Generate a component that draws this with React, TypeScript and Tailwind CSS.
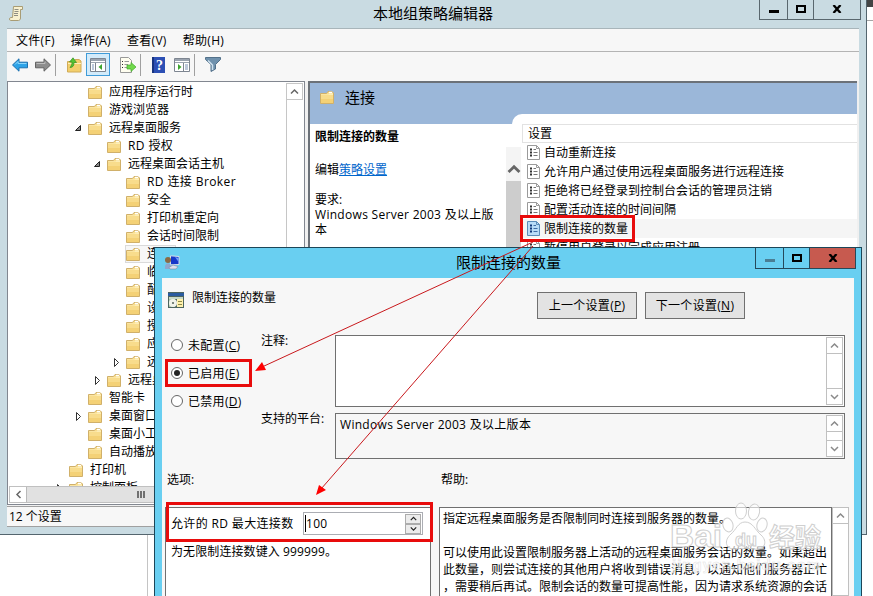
import type { ReactNode } from 'react'
import clsx from 'clsx'

type TreeItem = {
  label: string
  depth: number
  state?: 'open' | 'closed'
  selected?: boolean
}

const TREE: TreeItem[] = [
  { label: '应用程序运行时', depth: 1 },
  { label: '游戏浏览器', depth: 1 },
  { label: '远程桌面服务', depth: 1, state: 'open' },
  { label: 'RD 授权', depth: 2 },
  { label: '远程桌面会话主机', depth: 2, state: 'open' },
  { label: 'RD 连接 Broker', depth: 3 },
  { label: '安全', depth: 3 },
  { label: '打印机重定向', depth: 3 },
  { label: '会话时间限制', depth: 3 },
  { label: '连接', depth: 3, selected: true },
  { label: '临时文件夹', depth: 3 },
  { label: '配置文件', depth: 3 },
  { label: '设备和资源重定向', depth: 3 },
  { label: '授权', depth: 3 },
  { label: '应用程序兼容性', depth: 3 },
  { label: '远程会话环境', depth: 3, state: 'closed' },
  { label: '远程桌面连接客户端', depth: 2, state: 'closed' },
  { label: '智能卡', depth: 1 },
  { label: '桌面窗口管理器', depth: 1, state: 'closed' },
  { label: '桌面小工具', depth: 1 },
  { label: '自动播放策略', depth: 1 },
  { label: '打印机', depth: 0 },
  { label: '控制面板', depth: 0, state: 'closed' },
]

const INDENT = ['pl-[48px]', 'pl-[67px]', 'pl-[86px]', 'pl-[105px]']

const SETTINGS = [
  '自动重新连接',
  '允许用户通过使用远程桌面服务进行远程连接',
  '拒绝将已经登录到控制台会话的管理员注销',
  '配置活动连接的时间间隔',
  '限制连接的数量',
  '暂停用户登录以完成应用注册',
]

function Folder() {
  return (
    <svg width="14" height="14" viewBox="0 0 14 14" className="shrink-0">
      <path d="M.5 3.500h6l1.500-2h4l1.500 1.500v10.500H.5z" fill="#f8dc8c" stroke="#d0b06a" />
      <path d="M9 2.500h3" stroke="#fff" strokeWidth="1.500" />
      <path d="M1 4.500h7.500l1-1H13v1.500H1z" fill="#fdedb5" />
      <path d="M1 9h12v4H1z" fill="#f2ca68" opacity=".6" />
    </svg>
  )
}

function Chevron({ dir, color = '#666', size = 9, weight = 1.5 }: { dir: 'up' | 'down' | 'left'; color?: string; size?: number; weight?: number }) {
  const d = { up: 'M1 6.500 4.500 3 8 6.500', down: 'M1 3 4.500 6.500 8 3', left: 'M6.500 1 3 4.500 6.500 8' }[dir]
  return (
    <svg width={size} height={size} viewBox="0 0 9 9" fill="none" stroke={color} strokeWidth={weight}>
      <path d={d} />
    </svg>
  )
}

function Expander({ state }: { state?: 'open' | 'closed' }) {
  return (
    <svg width="8" height="10" viewBox="0 0 8 10" className="mr-[6px] -ml-px shrink-0">
      {state === 'open' && <path d="M6.500 2.500v5h-5z" fill="#8a8a8a" stroke="#222" />}
      {state === 'closed' && <path d="M2.500 1.500v8l4-4z" fill="#fff" stroke="#333" />}
    </svg>
  )
}

function SettingIcon({ selected }: { selected: boolean }) {
  return (
    <svg width="13" height="15" viewBox="0 0 13 15" className="mr-1 shrink-0">
      <path d="M.5.5h9l3 3v11H.5z" fill={selected ? '#b9dcf7' : '#fff'} stroke={selected ? '#5b8cb8' : '#9a9a9a'} />
      <path d="M9.500.5v3h3" fill="none" stroke={selected ? '#5b8cb8' : '#9a9a9a'} />
      <path d="M3 4.500h2M3 7.500h2M3 10.500h2" stroke={selected ? '#12397a' : '#333'} strokeWidth="2" />
      <path d="M6.500 4.500H9M6.500 7.500h4M6.500 10.500h4" stroke={selected ? '#3f6ca5' : '#777'} />
    </svg>
  )
}

function CaptionButtons({ dialog }: { dialog?: boolean }) {
  return (
    <div className={clsx('flex border border-t-0', dialog ? 'h-[21px] w-[101px] border-[#26495a]' : 'h-5 w-[102px] border-[#59676e]')}>
      <div className={clsx('flex w-7 justify-center border-r', dialog ? 'border-[#26495a] pt-[11px]' : 'border-[#59676e] pt-[10px]')}>
        <span className={clsx('h-[3px] w-[10px]', dialog ? 'bg-[#4a7e94]' : 'bg-black')} />
      </div>
      <div className={clsx('flex w-[26px] justify-center border-r', dialog ? 'border-[#26495a] pt-[6px]' : 'border-[#59676e] pt-[5px]')}>
        <span className="h-2 w-[10px] border-2 border-black" />
      </div>
      <div className={clsx('flex flex-1 justify-center', dialog ? 'bg-[#c75a4f] pt-[6px]' : 'pt-[5px]')}>
        <svg width="10" height="8" viewBox="0 0 10 8" stroke="#000" strokeWidth="2.300">
          <path d="M1.500 0 8.500 8M8.500 0 1.500 8" />
        </svg>
      </div>
    </div>
  )
}

function Sep({ className }: { className?: string }) {
  return <span className={clsx('h-[22px] w-px bg-[#a0a0a0]', className)} />
}

function PaneIcon({ flip }: { flip?: boolean }) {
  return (
    <svg width="16" height="14" viewBox="0 0 16 14">
      <path d="M.5.5h15v13H.5z" fill="#fff" stroke="#7d8590" />
      <path d="M1 1h14v2H1z" fill="#9aa3af" />
      <path d="M1 4.500h14" stroke="#9aa3af" />
      {flip ? (
        <>
          <path d="M9.500 5v8" stroke="#7d8590" />
          <path d="M4 6v6l3.500-3z" fill="#3ea52f" />
          <path d="M11 7h3M11 9h3M11 11h3" stroke="#7890b5" />
        </>
      ) : (
        <>
          <path d="M5.500 5v8" stroke="#7d8590" />
          <path d="M12 6v6L8.500 9z" fill="#3ea52f" />
          <path d="M2 7h2M2 9h2M2 11h2" stroke="#7890b5" />
        </>
      )}
    </svg>
  )
}

function Toolbar() {
  return (
    <div className="flex h-[29px] items-center bg-[#f7f7f7] pb-[4px] pl-[5px]">
      <svg width="16" height="14" viewBox="0 0 16 14">
        <path d="M.5 7 7 .8v3.400h8.500v5.600H7v3.400z" fill="#2da3e8" stroke="#1d6fae" />
        <path d="M3 6.500 6 3.500v2h8.500" stroke="#8bd5fa" fill="none" />
      </svg>
      <svg width="16" height="14" viewBox="0 0 16 14" className="ml-[7px]">
        <path d="M15.500 7 9 .8v3.400H.5v5.600H9v3.400z" fill="#8d8d8d" stroke="#626262" />
        <path d="M1.500 5.500H10v-2" stroke="#bcbcbc" fill="none" />
      </svg>
      <Sep className="ml-1" />
      <svg width="15" height="16" viewBox="0 0 15 16" className="ml-[11px]">
        <path d="M.5 4.500h6l1.500-2h4l2 1.500v11H.5z" fill="#f3cf6c" stroke="#d0ab58" />
        <path d="M1 6.500h13" stroke="#fdeeb8" />
        <path d="M3 10.500c3 0 4-2 4-5h2.500L6 .8 2.500 5H5c0 2-.5 3.500-2 5.500z" fill="#55c334" stroke="#369021" strokeWidth=".7" />
      </svg>
      <div className="ml-[4px] flex h-[23px] w-6 items-center justify-center border border-[#3f9bd8] bg-[#d3ebfa]">
        <PaneIcon />
      </div>
      <svg width="17" height="16" viewBox="0 0 17 16" className="ml-[10px]">
        <path d="M.5.5h8l3 3v12H.5z" fill="#fffef0" stroke="#999" />
        <path d="M2 4.500h1M2 7.500h1M2 10.500h1" stroke="#333" />
        <path d="M4.500 4.500H9M4.500 7.500H8M4.500 10.500H8" stroke="#999" />
        <path d="M7 8h4V5.500l5 4.500-5 4.500V12H7z" fill="#71d94c" stroke="#42a92a" strokeWidth=".7" />
      </svg>
      <Sep className="ml-[3px]" />
      <svg width="13" height="16" viewBox="0 0 13 16" className="ml-[11px]">
        <path d="M0 0h13v16H0z" fill="#2c4fb4" />
        <path d="M0 0h2v16H0z" fill="#18347f" />
        <text x="7.500" y="13" fontSize="14" textAnchor="middle" fill="#fff" fontFamily="Liberation Serif, serif" fontWeight="700">
          ?
        </text>
      </svg>
      <span className="ml-[9px]">
        <PaneIcon flip />
      </span>
      <Sep className="ml-[4px]" />
      <svg width="16" height="15" viewBox="0 0 16 15" className="ml-[10px]">
        <path d="M.5.5h15v2l-5 5V12L6 14.500v-7l-5.500-5z" fill="#6f91ad" stroke="#53718a" />
        <path d="M3 3.500 7.500 8v5" stroke="#cfe1ee" strokeWidth="1.500" fill="none" />
      </svg>
    </div>
  )
}

function Tree() {
  return (
    <div className="flex h-[424px] w-[298px] flex-col border border-[#828790] bg-white">
      <div className="flex h-[404px]">
        <div className="flex-1 overflow-hidden pt-px">
          {TREE.map((item) => (
            <div key={item.label + item.depth} className={clsx('flex h-[18px] items-center whitespace-nowrap', INDENT[item.depth])}>
              <Expander state={item.state} />
              <div
                className={clsx(
                  '-ml-px flex h-[18px] items-center border pr-1',
                  item.selected ? 'border-[#dadada] bg-[#f7f7f7]' : 'border-transparent',
                )}
              >
                <Folder />
                <span className={clsx('ml-[7px] leading-4', item.label.startsWith('RD') && 'tracking-[0.4px]')}>{item.label}</span>
              </div>
            </div>
          ))}
        </div>
        <div className="mr-px mt-px w-[17px] border-l border-[#c6c6c6]">
          <div className="flex h-[17px] items-center justify-center border-y border-r border-[#c6c6c6]">
            <Chevron dir="up" />
          </div>
        </div>
      </div>
      <div className="mx-px flex h-[17px] border border-[#c0c0c0] bg-[#e1e1e1]">
        <div className="flex w-[17px] items-center justify-center border-r border-[#bababa] bg-white">
          <Chevron dir="left" />
        </div>
        <div className="ml-[110px] flex items-center gap-px">
          <i className="h-[7px] w-[2px] bg-[#707070]" />
          <i className="h-[7px] w-[2px] bg-[#707070]" />
          <i className="h-[7px] w-[2px] bg-[#707070]" />
        </div>
      </div>
    </div>
  )
}

function DetailsPane() {
  return (
    <div className="ml-[3px] flex h-[424px] w-[549px] flex-col border-l-2 border-t-2 border-[#6b7178] bg-[#9bb7d9]">
      <div className="flex h-[31px] items-center pb-[3px] pl-[10px]">
        <Folder />
        <span className="ml-[11px] text-[15px] leading-5">连接</span>
      </div>
      <div className="flex flex-1">
        <div className="mt-[10px] flex w-[202px] shrink-0 bg-white">
          <div className="flex w-[195px] flex-col pl-[5px] pt-[5px] leading-[15px]">
            <b className="leading-[16px]">限制连接的数量</b>
            <p className="mt-[17px] leading-[16px]">
              编辑<a className="text-[#0066cc] underline">策略设置</a>
            </p>
            <p className="mt-[14px]">要求:</p>
            <p className="whitespace-nowrap tracking-[0.3px]">Windows Server 2003 及以上版</p>
            <p>本</p>
          </div>
        </div>
        <div className="flex flex-1 rounded-tl-[10px] bg-white">
          <div className="-ml-[6px] mt-[33px] w-[15px] bg-[#cdcdcd]">
            <div className="flex h-[34px] items-center justify-center bg-[#f4f4f4] pt-[9px]">
              <Chevron dir="up" size={14} weight={1.8} />
            </div>
          </div>
          <div className="ml-px flex-1">
            <div className="mt-[10px] h-[19px] border border-r-0 border-[#e2e2e2] pl-[5px] leading-[17px]">设置</div>
            {SETTINGS.map((name, i) => (
              <div key={name} className={clsx('flex h-[19px] items-center pl-[5px]', i === 4 && 'bg-[#f5f5f5]')}>
                <SettingIcon selected={i === 4} />
                <span className="leading-4">{name}</span>
              </div>
            ))}
          </div>
        </div>
      </div>
    </div>
  )
}

function EditorWindow() {
  return (
    <div className="absolute left-0 top-0 h-[535px] w-[867px] border-b border-r border-[#54656e] bg-[#c9dbe2] pl-[7px]">
      <header className="flex h-7 items-start">
        <svg width="15" height="15" viewBox="0 0 15 15" className="ml-[2px] mt-[6px]">
          <path d="M4.500.5h9v3h-2v8.500c0 1.500-1 2.500-2 2.500h-8c-1.500 0-1-3 0-3h2z" fill="#f9f1cf" stroke="#a89c75" />
          <path d="M5.500 3.500h4M5.500 5.500h4M5 7.500h4M5 9.500h4" stroke="#8f8e83" />
        </svg>
        <h1 className="flex-1 pl-[50px] pr-[74px] text-center text-[15px] leading-[27px]">本地组策略编辑器</h1>
        <div className="absolute right-[5px] top-0">
          <CaptionButtons />
        </div>
      </header>
      <div className="h-[499px] w-[852px] border-t border-[#a8b5ba] bg-[#f0f0f0]">
        <nav className="flex h-[23px] items-center gap-[16px] border-b border-[#b4b4b4] bg-[#f7f7f7] pl-[9px] pt-px tracking-[0.3px]">
          <span>文件(F)</span>
          <span>操作(A)</span>
          <span>查看(V)</span>
          <span>帮助(H)</span>
        </nav>
        <Toolbar />
        <div className="flex">
          <Tree />
          <DetailsPane />
        </div>
        <footer className="mt-px h-[21px] border-b border-t border-[#a0a0a0] bg-[#f7f7f7] pl-[2px] leading-[20px]">12 个设置</footer>
      </div>
    </div>
  )
}

function ScrollBar({ className, children }: { className?: string; children?: ReactNode }) {
  return (
    <div className={clsx('flex w-[17px] flex-col justify-between border border-[#c0c0c0] bg-white', className)}>
      <div className="flex h-4 items-center justify-center border-b border-[#c0c0c0]">
        <Chevron dir="up" color="#8a8a8a" />
      </div>
      {children}
    </div>
  )
}

function ScrollDown() {
  return (
    <div className="flex h-4 items-center justify-center border-t border-[#c0c0c0]">
      <Chevron dir="down" color="#8a8a8a" />
    </div>
  )
}

function Radio({ label, hotkey, checked }: { label: string; hotkey: string; checked?: boolean }) {
  return (
    <label className="flex h-7 items-center">
      <span className="mr-[5px] flex size-3 items-center justify-center rounded-full border border-[#666] bg-white">
        {checked && <span className="size-[6px] rounded-full bg-[#222]" />}
      </span>
      <span className="pt-px tracking-[0.3px]">
        {label}(<u>{hotkey}</u>)
      </span>
    </label>
  )
}

function PolicyDialog() {
  return (
    <div className="absolute left-[154px] top-[247px] h-[349px] w-[708px] overflow-hidden border-x border-t border-[#1c4658] bg-[#69cff1] pl-[7px]">
      <header className="flex h-[30px] items-start">
        <svg width="16" height="15" viewBox="0 0 16 15" className="ml-[2px] mt-[7px]">
          <path d="M6.500.8 15 1.500v8l-8.500.3z" fill="#1737c9" stroke="#d9dfe8" />
          <path d="m11 2 3.500 1v4z" fill="#6c9bff" />
          <circle cx="4" cy="5" r="3" fill="#8b6b45" />
          <path d="M1 12c0-5 6-5 6 0v2H1z" fill="#8fa7cd" />
          <path d="M5 12.500 9 10l5 1.500-2 2.500H6z" fill="#e1e1ec" stroke="#7d84a3" strokeWidth=".6" />
        </svg>
        <h2 className="flex-1 pr-[24px] text-center text-[15px] leading-[29px]">限制连接的数量</h2>
        <div className="absolute right-[5px] top-0">
          <CaptionButtons dialog />
        </div>
      </header>
      <div className="h-[318px] w-[692px] bg-[#f7f7f7]">
        <div className="flex h-[57px] pl-[6px] pt-[14px]">
          <svg width="16" height="16" viewBox="0 0 16 16">
            <path d="M0 0h16v16H0z" fill="#4d655f" />
            <path d="M0 1h16v3H0z" fill="#2b5ca0" />
            <path d="M1 5h14v2H1z" fill="#c9dac9" />
            <path d="M1 7h6v8H1z" fill="#a9c3a9" />
            <circle cx="5" cy="11" r="4" fill="#f1f3ea" />
            <circle cx="5" cy="11" r="1" fill="#526158" />
            <path d="M9 7h6v8H9z" fill="#fff1ad" />
            <path d="M10 9.500h4M10 12.500h4" stroke="#8e8a48" />
          </svg>
          <span className="ml-2 -mt-[2px] leading-4">限制连接的数量</span>
          <div className="ml-[261px] flex gap-2">
            <button className="h-[27px] w-[100px] border border-[#707070] bg-[#e3e3e3] tracking-[0.3px]">
              上一个设置(<u>P</u>)
            </button>
            <button className="h-[27px] w-[100px] border border-[#707070] bg-[#e3e3e3] tracking-[0.3px]">
              下一个设置(<u>N</u>)
            </button>
          </div>
        </div>
        <div className="flex h-[129px]">
          <div className="-mt-[4px] w-[99px] pl-[9px]">
            <Radio label="未配置" hotkey="C" />
            <Radio label="已启用" hotkey="E" checked />
            <Radio label="已禁用" hotkey="D" />
          </div>
          <div className="w-[74px] leading-4">
            <p className="-mt-[2px]">注释:</p>
            <p className="mt-[62px]">支持的平台:</p>
          </div>
          <div className="w-[510px]">
            <div className="flex h-[72px] justify-end border border-[#707070] bg-white p-px">
              <ScrollBar>
                <ScrollDown />
              </ScrollBar>
            </div>
            <div className="mt-[6px] flex h-[46px] justify-between border border-[#707070] bg-[#f7f7f7] p-px pl-1">
              <span className="pt-[2px] leading-4 tracking-[0.3px]">Windows Server 2003 及以上版本</span>
              <ScrollBar>
                <ScrollDown />
              </ScrollBar>
            </div>
          </div>
        </div>
        <div className="flex h-[43px] pl-[5px] pt-2 leading-4">
          <span className="w-[274px]">选项:</span>
          <span>帮助:</span>
        </div>
        <div className="flex h-[89px] pl-[3px]">
          <div className="w-[266px] border border-b-0 border-[#707070] bg-white pl-[5px] pt-[4px]">
            <div className="flex items-center">
              <span className="w-[132px] tracking-[0.35px]">允许的 RD 最大连接数</span>
              <div className="flex h-[23px] w-[120px] items-center border border-[#abadb3] bg-white p-px">
                <span className="h-[17px] w-px bg-black" />
                <span className="flex-1 tracking-[0.3px]">100</span>
                <div className="flex h-[20px] w-4 flex-col">
                  <div className="flex h-[10px] items-center justify-center border border-[#acacac] bg-[#ececec]">
                    <Chevron dir="up" color="#222" size={7} />
                  </div>
                  <div className="flex h-[10px] items-center justify-center border border-[#acacac] bg-[#ececec]">
                    <Chevron dir="down" color="#222" size={7} />
                  </div>
                </div>
              </div>
            </div>
            <p className="mt-[9px] leading-4 tracking-[0.1px]">为无限制连接数键入 999999。</p>
          </div>
          <div className="ml-2 w-[393px] whitespace-nowrap border border-b-0 border-[#707070] bg-white pl-[3px] pt-[2px] leading-[17px]">
            <p>指定远程桌面服务是否限制同时连接到服务器的数量。</p>
            <p className="mt-[17px]">可以使用此设置限制服务器上活动的远程桌面服务会话的数量。如果超出</p>
            <p>此数量，则尝试连接的其他用户将收到错误消息，以通知他们服务器正忙</p>
            <p>，需要稍后再试。限制会话的数量可提高性能，因为请求系统资源的会话</p>
          </div>
          <ScrollBar />
        </div>
      </div>
    </div>
  )
}

function Annotations() {
  return (
    <svg width="873" height="596" viewBox="0 0 873 596" className="pointer-events-none absolute left-0 top-0" fill="none">
      <g stroke="#e80c0c" strokeWidth="3">
        <path d="M521.500 216.500h112v24h-112z" />
        <path d="M166.500 360.500h84v25h-84z" />
        <path d="M167.500 503.500h264v37h-264z" />
      </g>
      <path d="M533 242 262 367M533 246 321 489" stroke="#c8181c" />
      <path d="M255 371l7-9 4 8zM316 495l3-10 7 5z" fill="#f00" />
    </svg>
  )
}

function Watermark() {
  return (
    <svg width="160" height="80" viewBox="0 0 160 80" className="pointer-events-none absolute left-[668px] top-[498px]">
      <g fill="#fff" fillOpacity=".6" stroke="#cfcfcf" strokeWidth="1" fontFamily="Liberation Sans, Noto Sans CJK SC, sans-serif" fontWeight="700">
        <text x="2" y="49" fontSize="31" textLength="52" lengthAdjust="spacingAndGlyphs">
          Bai
        </text>
        <ellipse cx="60" cy="27" rx="5" ry="7" transform="rotate(-15 60 27)" />
        <ellipse cx="73" cy="13" rx="5.500" ry="8" />
        <ellipse cx="86" cy="14" rx="5.500" ry="8" transform="rotate(10 86 14)" />
        <ellipse cx="94" cy="27" rx="5" ry="7" transform="rotate(15 94 27)" />
        <path d="M77 24c-7 0-9 8-14 12-8 7-5 16 5 15 6-1 12-1 18 0 11 2 14-8 7-14-6-5-8-13-16-13z" />
        <text x="67" y="48" fontSize="18">
          du
        </text>
        <text x="101" y="49" fontSize="26">
          经验
        </text>
        <text x="4" y="72" fontSize="15" stroke="#e2e2e2" strokeWidth=".5" textLength="148" fillOpacity=".5">
          jingyan.baidu.com
        </text>
      </g>
    </svg>
  )
}

export default function App() {
  return (
    <div className="relative h-[596px] w-[873px] overflow-hidden bg-white font-['Open_Sans','Noto_Sans_CJK_SC',sans-serif] text-[12px] text-black">
      <div className="ml-[867px] h-[21px] border-b border-[#a5a5a5]">
        <div className="h-[7px] bg-[#444]" />
      </div>
      <div className="ml-[147px] h-[575px] w-px bg-[#c4c4c4]" />
      <EditorWindow />
      <PolicyDialog />
      <Annotations />
      <Watermark />
    </div>
  )
}
